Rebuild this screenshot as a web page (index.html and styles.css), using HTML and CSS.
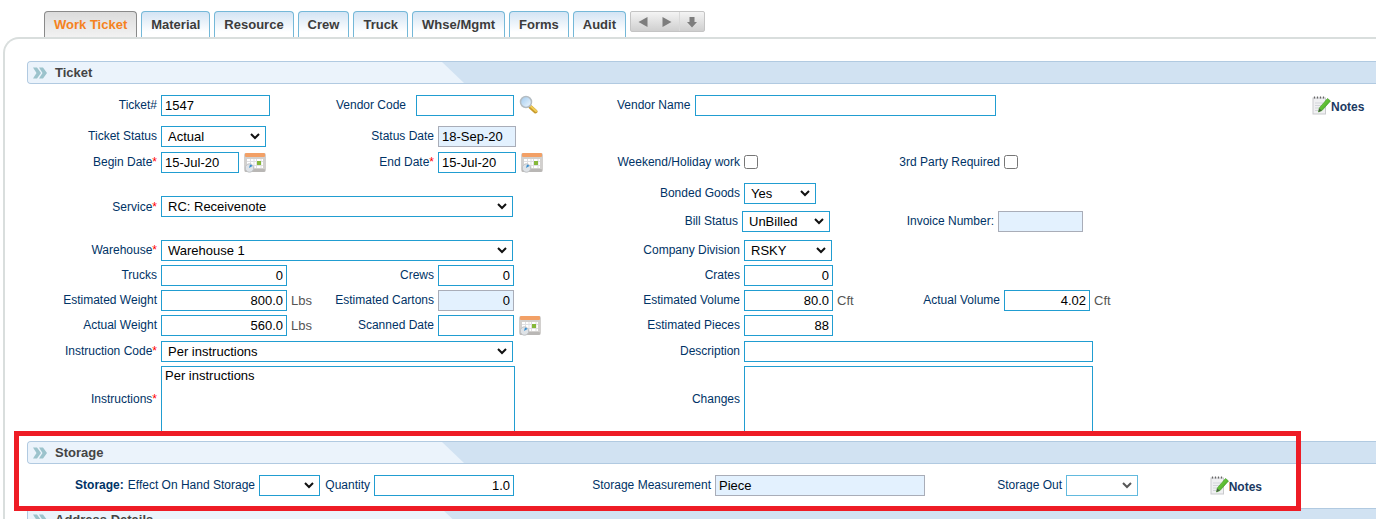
FILE: index.html
```html
<!DOCTYPE html>
<html lang="en">
<head>
<meta charset="utf-8">
<title>Work Ticket</title>
<link rel="stylesheet" href="styles.css">
</head>
<body>
<svg class="defs" aria-hidden="true">
  <defs>
    <linearGradient id="lens" x1="0" y1="0" x2="1" y2="1"><stop offset="0" stop-color="#9fc9ee"/><stop offset="1" stop-color="#f1f9ff"/></linearGradient>
    <linearGradient id="pencil" x1="0" y1="0" x2="1" y2="1"><stop offset="0" stop-color="#8be04a"/><stop offset="1" stop-color="#2f9a1d"/></linearGradient>
  </defs>
  <symbol id="calendar" viewBox="0 0 22 21">
    <rect x="0" y="1" width="22" height="19" rx="2" fill="#d2d0ce"/>
    <rect x="1" y="17" width="20" height="3" rx="1" fill="#b9b7b5"/>
    <rect x="1" y="1" width="20" height="4" rx="1" fill="#f2a066"/>
    <path d="M3 7h16v9H3z" fill="#fff"/>
    <path d="M3 9.500h16M3 13.500h16M6.500 7v9M10 7v9M12.500 7v9M17 7v9" stroke="#dfdfe2" fill="none"/>
    <rect x="13" y="9" width="4" height="4" fill="#86b83a"/>
    <circle cx="5.500" cy="16" r="4.200" fill="#dfe3e7" stroke="#bfc1c4"/>
    <path d="M5 16l1-3.500A3.500 3.500 0 0 1 8.500 14z" fill="#3a8fd0"/>
  </symbol>
  <symbol id="search" viewBox="0 0 19 19">
    <path d="M11.500 12l5 4.500" stroke="#c79a2c" stroke-width="4" stroke-linecap="round"/>
    <path d="M12 11.500l5 4.500" stroke="#f2cd58" stroke-width="2" stroke-linecap="round"/>
    <circle cx="7" cy="7" r="5.500" fill="url(#lens)" stroke="#b4bcc2" stroke-width="1.500"/>
  </symbol>
  <symbol id="note" viewBox="0 0 19 19">
    <rect x="1" y="2" width="12.500" height="16" fill="#f0f0f2" stroke="#c9cacd"/>
    <path d="M3 7h8M3 9.500h6M3 12h4M3 14.500h3" stroke="#d3d5da"/>
    <path d="M2.500 .5v2M5.500 .5v2M8.500 .5v2M11.500 .5v2" stroke="#666" stroke-width="1.200"/>
    <path d="M15.500 2.500l3 2.500-8.500 9.500-3.500 1.500.8-4z" fill="url(#pencil)" stroke="#38941e" stroke-width=".6"/>
    <path d="M7.200 12.400l2.500 2-3.200 1.600z" fill="#4b5b45"/>
  </symbol>
  <symbol id="chevrons" viewBox="0 0 14 12">
    <path d="M0 .5h4L8 6l-4 5.500H0L3.500 6zM6 .5h4L14 6l-4 5.500H6L9.500 6z" fill="#9cc3cc"/>
  </symbol>
</svg>

<nav class="tabs">
  <a class="tab tab--active" href="#">Work Ticket</a>
  <a class="tab" href="#">Material</a>
  <a class="tab" href="#">Resource</a>
  <a class="tab" href="#">Crew</a>
  <a class="tab" href="#">Truck</a>
  <a class="tab" href="#">Whse/Mgmt</a>
  <a class="tab" href="#">Forms</a>
  <a class="tab" href="#">Audit</a>
  <div class="pager">
    <button type="button" aria-label="Previous"><svg width="10" height="12" viewBox="0 0 10 12"><path d="M9.500 1v10L.5 6z"/></svg></button>
    <button type="button" aria-label="Next"><svg width="10" height="12" viewBox="0 0 10 12"><path d="M.5 1v10l9-5z"/></svg></button>
    <button type="button" aria-label="Down"><svg width="10" height="12" viewBox="0 0 10 12"><path d="M2.500 1h5v5H10L5 11.500 0 6h2.500z"/></svg></button>
  </div>
</nav>

<main class="panel">
  <section>
    <h2 class="bar"><span class="bar-title"><svg width="14" height="12"><use href="#chevrons"/></svg>Ticket</span></h2>
    <form class="ticket">
      <label class="c1" for="ticket">Ticket#</label>
      <div class="c2"><input id="ticket" class="w109" value="1547"></div>
      <div class="c3 span2 vendor-code"><label for="vcode">Vendor Code</label><input id="vcode" class="w98"><button type="button" class="icon" aria-label="Find vendor"><svg width="19" height="19"><use href="#search"/></svg></button></div>
      <div class="c5 span4 vendor-name"><label for="vname">Vendor Name</label><input id="vname" class="w301"></div>
      <a class="notes c9" href="#"><svg width="19" height="19"><use href="#note"/></svg>Notes</a>

      <label class="c1" for="status">Ticket Status</label>
      <div class="c2"><select id="status" class="w105"><option>Actual</option></select></div>
      <label class="c3" for="sdate">Status Date</label>
      <div class="c4"><input id="sdate" class="w78" value="18-Sep-20" readonly></div>

      <label class="c1" for="begin">Begin Date<i>*</i></label>
      <div class="c2"><input id="begin" class="w78" value="15-Jul-20"><button type="button" class="icon" aria-label="Pick begin date"><svg width="22" height="21"><use href="#calendar"/></svg></button></div>
      <label class="c3" for="end">End Date<i>*</i></label>
      <div class="c4"><input id="end" class="w78" value="15-Jul-20"><button type="button" class="icon" aria-label="Pick end date"><svg width="22" height="21"><use href="#calendar"/></svg></button></div>
      <label class="c5" for="weekend">Weekend/Holiday work</label>
      <div class="c6"><input id="weekend" type="checkbox"></div>
      <label class="c7" for="third">3rd Party Required</label>
      <div class="c8"><input id="third" type="checkbox"></div>

      <label class="c1 service" for="service">Service<i>*</i></label>
      <div class="c2 span3 service"><select id="service" class="w352"><option>RC: Receivenote</option></select></div>
      <label class="c5 r4" for="bonded">Bonded Goods</label>
      <div class="c6 r4"><select id="bonded" class="w72"><option>Yes</option></select></div>
      <div class="c5 r5 span2 bill"><label for="bill">Bill Status</label><select id="bill" class="w88"><option>UnBilled</option></select></div>
      <div class="c7 r5 span2 invoice"><label for="invoice">Invoice Number:</label><input id="invoice" class="w85" readonly></div>

      <label class="c1" for="wh">Warehouse<i>*</i></label>
      <div class="c2 span3"><select id="wh" class="w352"><option>Warehouse 1</option></select></div>
      <label class="c5" for="division">Company Division</label>
      <div class="c6"><select id="division" class="w88"><option>RSKY</option></select></div>

      <label class="c1" for="trucks">Trucks</label>
      <div class="c2"><input id="trucks" class="num w126" value="0"></div>
      <label class="c3" for="crews">Crews</label>
      <div class="c4"><input id="crews" class="num w76" value="0"></div>
      <label class="c5" for="crates">Crates</label>
      <div class="c6"><input id="crates" class="num w89" value="0"></div>

      <label class="c1" for="eweight">Estimated Weight</label>
      <div class="c2"><input id="eweight" class="num w126" value="800.0"><span class="unit">Lbs</span></div>
      <label class="c3" for="cartons">Estimated Cartons</label>
      <div class="c4"><input id="cartons" class="num w76" value="0" readonly></div>
      <label class="c5" for="evol">Estimated Volume</label>
      <div class="c6"><input id="evol" class="num w89" value="80.0"><span class="unit">Cft</span></div>
      <label class="c7" for="avol">Actual Volume</label>
      <div class="c8"><input id="avol" class="num w86" value="4.02"><span class="unit">Cft</span></div>

      <label class="c1" for="aweight">Actual Weight</label>
      <div class="c2"><input id="aweight" class="num w126" value="560.0"><span class="unit">Lbs</span></div>
      <label class="c3" for="scanned">Scanned Date</label>
      <div class="c4"><input id="scanned" class="w76"><button type="button" class="icon" aria-label="Pick scanned date"><svg width="22" height="21"><use href="#calendar"/></svg></button></div>
      <label class="c5" for="pieces">Estimated Pieces</label>
      <div class="c6"><input id="pieces" class="num w89" value="88"></div>

      <label class="c1" for="code">Instruction Code<i>*</i></label>
      <div class="c2 span3"><select id="code" class="w352"><option>Per instructions</option></select></div>
      <label class="c5" for="desc">Description</label>
      <div class="c6 span3"><input id="desc" class="w349"></div>

      <label class="c1 mid" for="instr">Instructions<i>*</i></label>
      <div class="c2 span3"><textarea id="instr" class="w354">Per instructions</textarea></div>
      <label class="c5 mid" for="changes">Changes</label>
      <div class="c6 span3"><textarea id="changes" class="w349"></textarea></div>
    </form>
  </section>

  <section class="storage">
    <h2 class="bar"><span class="bar-title"><svg width="14" height="12"><use href="#chevrons"/></svg>Storage</span></h2>
    <form class="storage-row">
      <div><b>Storage:</b><label for="effect">Effect On Hand Storage</label><select id="effect" class="w61"><option></option></select></div>
      <div><label for="qty">Quantity</label><input id="qty" class="num w140" value="1.0"></div>
      <div><label for="measure">Storage Measurement</label><input id="measure" class="w210" value="Piece" readonly></div>
      <div><label for="out">Storage Out</label><select id="out" class="w72" disabled><option></option></select></div>
      <div><a class="notes" href="#"><svg width="19" height="19"><use href="#note"/></svg>Notes</a></div>
    </form>
    <div class="highlight"></div>
  </section>

  <section>
    <h2 class="bar"><span class="bar-title"><svg width="14" height="12"><use href="#chevrons"/></svg>Address Details</span></h2>
  </section>
</main>
</body>
</html>
```
FILE: styles.css
```css
* { box-sizing: border-box; }
html { height: 100%; overflow: hidden; }
body {
  margin: 0;
  height: 100%;
  overflow: hidden;
  background: #fff;
  color: #003366;
  font: 12px/20px "Liberation Sans", Arial, sans-serif;
}
.defs { position: absolute; width: 0; height: 0; }
svg { display: block; flex: none; }

.tabs { display: flex; gap: 4px; padding: 11px 0 0 44px; height: 37px; }
.tab {
  padding: 0 9px;
  border: 1px solid #74b8d8;
  border-radius: 4px 4px 0 0;
  border-bottom: 0;
  background: linear-gradient(#d3e4f4, #fff 80%);
  color: #3c3c3c;
  font-size: 13px;
  font-weight: bold;
  line-height: 26px;
  text-decoration: none;
}
.tab--active {
  border-color: #8a8a8a;
  background: linear-gradient(#dcdcdc, #f2f2f2);
  color: #f58220;
}
.pager {
  display: flex;
  align-self: flex-start;
  width: 75px;
  height: 21px;
  border: 1px solid #c4c4c4;
  border-radius: 2px;
  background: linear-gradient(#f4f4f4, #cfcfcf);
}
.pager button {
  display: flex;
  flex: 1;
  align-items: center;
  justify-content: center;
  padding: 0;
  border: 0;
  background: none;
}
.pager button:last-child { border-left: 1px solid #d9d9d9; }
.pager path { fill: #7d7d7d; }

.panel {
  margin-left: 3px;
  padding: 22px 0 0 22px;
  border: solid #d9dedd;
  border-width: 2px 0 0 2px;
  border-radius: 16px 0 0 0;
  min-height: calc(100% - 37px);
}

.bar {
  margin: 0;
  height: 23px;
  border: 1px solid #b1cae1;
  border-right: 0;
  border-radius: 4px 0 0 4px;
  background: #d1e2f2;
  overflow: hidden;
}
.bar-title {
  display: flex;
  align-items: center;
  gap: 8px;
  width: 436px;
  height: 21px;
  padding-left: 5px;
  background: #ebf3fb;
  clip-path: polygon(0 0, calc(100% - 22px) 0, 100% 100%, 0 100%);
  color: #444;
  font-size: 13px;
  line-height: 21px;
}

.ticket {
  display: grid;
  grid-template-columns: 130px 155px 114px 158px 140px 140px 112px minmax(194px, 1fr) 164px;
  grid-template-rows: 27px 22px 27px 24px 25px 21px 21px 21px 22px 21px auto;
  gap: 4px;
  align-items: start;
  padding-top: 11px;
}
.ticket div, .storage-row div { display: flex; align-items: flex-start; gap: 4px; }
label { text-align: right; white-space: nowrap; color: #003366; line-height: 20px; }
label i { color: #f00; font-style: normal; }
.c1 { grid-column: 1; }
.c2 { grid-column: 2; }
.c3 { grid-column: 3; }
.c4 { grid-column: 4; }
.c5 { grid-column: 5; }
.c6 { grid-column: 6; }
.c7 { grid-column: 7; }
.c8 { grid-column: 8; }
.c9 { grid-column: 9; }
.span2 { grid-column-end: span 2; }
.span3 { grid-column-end: span 3; }
.span4 { grid-column-end: span 4; }
.service { grid-row: 4 / span 2; align-self: center; margin-bottom: 6px; }
.r4 { grid-row: 4; }
.r5 { grid-row: 5; }
.mid { align-self: center; margin-bottom: 4px; }
.vendor-code label { width: 86px; margin-right: 6px; }
.ticket .vendor-name { padding-left: 17px; gap: 5px; }
.bill label { width: 138px; }
.invoice label { width: 106px; }

input, select, textarea {
  display: block;
  margin: 0;
  height: 21px;
  border: 1px solid #219dd1;
  border-radius: 0;
  background: #fff;
  color: #000;
  font: 13px/16px "Liberation Sans", Arial, sans-serif;
}
input, textarea { padding: 1px 3px; }
select {
  appearance: none;
  padding: 0 20px 0 6px;
  background: #fff url("data:image/svg+xml,%3Csvg xmlns='http://www.w3.org/2000/svg' width='10' height='7'%3E%3Cpath d='M1 1l4 4 4-4' fill='none' stroke='%23111' stroke-width='2'/%3E%3C/svg%3E") no-repeat right 5px center;
}
select:disabled { opacity: .7; color: #000; }
textarea { height: 70px; resize: none; }
input[readonly] { border-color: #a9adb8; background: #e3f1fe; }
input[type="checkbox"] { width: 14px; height: 14px; margin: 3px 0; }
.num { text-align: right; }
.unit { color: #555; font-size: 13px; line-height: 21px; }
.icon { padding: 0; margin-left: 1px; border: 0; background: none; }

.w61 { width: 61px; }
.w72 { width: 72px; }
.w76 { width: 76px; }
.w78 { width: 78px; }
.w85 { width: 85px; }
.w86 { width: 86px; }
.w88 { width: 88px; }
.w89 { width: 89px; }
.w98 { width: 98px; }
.w105 { width: 105px; }
.w109 { width: 109px; }
.w126 { width: 126px; }
.w140 { width: 140px; }
.w210 { width: 210px; }
.w301 { width: 301px; }
.w349 { width: 349px; }
.w352 { width: 352px; }
.w354 { width: 354px; }

.notes {
  display: flex;
  align-items: center;
  color: #1b3a63;
  font-size: 12px;
  font-weight: bold;
  line-height: 24px;
  text-decoration: none;
}
.notes svg { margin-bottom: 3px; }
.ticket .notes { margin-left: 100px; }

.storage { position: relative; z-index: 1; margin-top: 5px; padding-bottom: 12px; }
.storage-row {
  display: grid;
  grid-template-columns: 293px 194px 411px 213px 124px;
  height: 32px;
  padding-top: 11px;
}
.storage-row div { justify-content: flex-end; }
.highlight {
  position: absolute;
  top: -10px;
  left: -13px;
  right: 75px;
  bottom: -3px;
  border: 5px solid #ee1c25;
  pointer-events: none;
}
```
